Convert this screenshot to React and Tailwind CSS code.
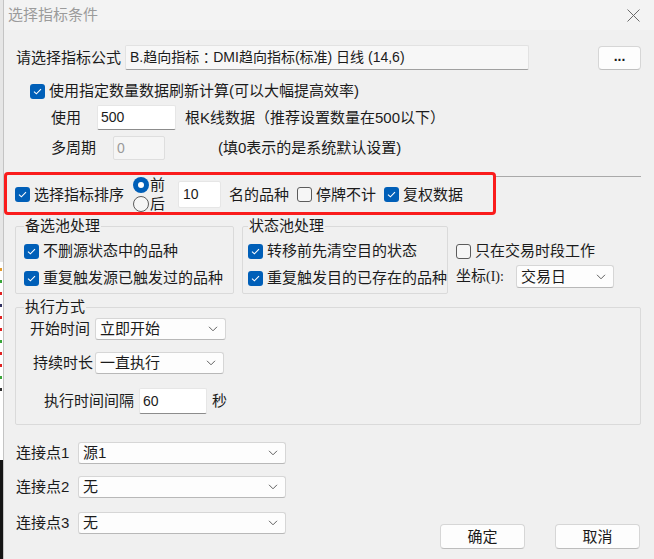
import React from "react";

const font = "font-['Liberation_Sans','Noto_Sans_CJK_SC',sans-serif]";

function Check({ on }) {
  return on ? (
    <span className="w-[15px] h-[15px] rounded-[3px] bg-[#005fb8] flex items-center justify-center shrink-0">
      <svg width="9" height="7" viewBox="0 0 9 7">
        <path d="M1 3.6 L3.4 5.8 L8 1.2" stroke="#fff" strokeWidth="1.1" fill="none" />
      </svg>
    </span>
  ) : (
    <span className="w-[15px] h-[15px] rounded-[3px] border border-[#5c5c5c] bg-[#f6f6f6] shrink-0" />
  );
}

function Radio({ on }) {
  return on ? (
    <span className="w-[16px] h-[16px] rounded-full bg-[#005fb8] flex items-center justify-center shrink-0">
      <span className="w-[6px] h-[6px] rounded-full bg-white" />
    </span>
  ) : (
    <span className="w-[16px] h-[16px] rounded-full border border-[#5c5c5c] bg-[#f6f6f6] shrink-0" />
  );
}

function Chevron() {
  return (
    <svg width="10" height="6" viewBox="0 0 10 6" className="shrink-0">
      <path d="M1 0.8 L5 4.8 L9 0.8" stroke="#606060" strokeWidth="1" fill="none" />
    </svg>
  );
}

function Select({ value, className }) {
  return (
    <div className={"flex items-center justify-between bg-[#fdfdfd] border border-[#d6d6d6] border-b-[#b8b8b8] rounded-[3px] pl-[4px] pr-[7px] " + className}>
      <span className="leading-[18px]">{value}</span>
      <Chevron />
    </div>
  );
}

function CheckRow({ on, label, className = "" }) {
  return (
    <div className={"flex items-center gap-[4px] h-[20px] " + className}>
      <Check on={on} />
      <span className="leading-[18px] whitespace-nowrap">{label}</span>
    </div>
  );
}

export default function App() {
  return (
    <div className={"w-[654px] h-[559px] flex overflow-hidden bg-[#f0f0f0] text-[15px] text-[#1b1b1b] " + font}>
      <div className="w-[3px] flex flex-col shrink-0">
        <div className="h-[262px] bg-[#e6e6e6]" />
        <div className="h-[198px] bg-white flex flex-col gap-[9px] pt-[6px]">
          <div className="h-[3px] w-[2px] bg-[#e39a2a]" />
          <div className="h-[3px] w-[2px] bg-[#3aa53a]" />
          <div className="h-[3px] w-[2px] bg-[#e02020]" />
          <div className="h-[3px] w-[2px] bg-[#303060]" />
          <div className="h-[3px] w-[2px] bg-[#e02020]" />
          <div className="h-[3px] w-[2px] bg-[#e02020]" />
          <div className="h-[3px] w-[2px] bg-[#3aa53a]" />
          <div className="h-[3px] w-[2px] bg-[#e02020]" />
          <div className="h-[3px] w-[2px] bg-[#e02020]" />
          <div className="h-[3px] w-[2px] bg-[#3aa53a]" />
          <div className="h-[3px] w-[2px] bg-[#303030]" />
        </div>
        <div className="flex-1 bg-[#141414]" />
      </div>

      <div className="flex-1 flex flex-col border-l border-[#c4c4c4]">
        {/* title bar */}
        <div className="h-[30px] bg-[#f3f3f3] flex items-center justify-between pl-[4px] pr-[14px]">
          <span className="text-[#9b9b9b] text-[15px] leading-[18px]">选择指标条件</span>
          <svg width="13" height="13" viewBox="0 0 13 13">
            <path d="M0.5 0.5 L12.5 12.5 M12.5 0.5 L0.5 12.5" stroke="#6a6a6a" strokeWidth="1" />
          </svg>
        </div>

        <div className="flex-1 flex flex-col pl-[11px] pr-[13px]">
          {/* formula row */}
          <div className="flex items-center h-[25px] mt-[15px]">
            <span className="ml-[1px] leading-[18px] w-[105px]">请选择指标公式</span>
            <div className="ml-[4px] w-[404px] h-[25px] flex items-center bg-[#f7f7f7] border border-[#e2e2e2] border-b-[#a0a0a0] rounded-[2px] pl-[4px] text-[14px] whitespace-pre">
              B.趋向指标<span className="font-['Noto_Sans_CJK_JP',sans-serif]">：</span>DMI趋向指标(标准) 日线 (14,6)
            </div>
            <button className="ml-auto w-[43px] h-[24px] bg-[#fdfdfd] border border-[#d6d6d6] border-b-[#c0c0c0] rounded-[4px] text-[14px] font-bold leading-[12px] pb-[4px]">
              ...
            </button>
          </div>

          <CheckRow on label="使用指定数量数据刷新计算(可以大幅提高效率)" className="ml-[15px] mt-[11px]" />

          <div className="flex items-center h-[25px] mt-[4px]">
            <span className="ml-[36px] leading-[18px]">使用</span>
            <div className="ml-[16px] w-[79px] h-[25px] flex items-center bg-white border border-[#e6e6e6] border-b-[#8c8c8c] rounded-[2px] pl-[3px] text-[14px]">
              500
            </div>
            <span className="ml-[9px] leading-[18px]">根K线数据（推荐设置数量在500以下）</span>
          </div>

          <div className="flex items-center h-[24px] mt-[6px]">
            <span className="ml-[36px] leading-[18px]">多周期</span>
            <div className="ml-[17px] w-[52px] h-[24px] flex items-center bg-[#f5f5f5] border border-[#dedede] rounded-[2px] pl-[3px] text-[14px] text-[#9a9a9a]">
              0
            </div>
            <span className="ml-[53px] leading-[18px]">(填0表示的是系统默认设置)</span>
          </div>

          {/* sort row (highlighted) */}
          <div className="flex items-start mt-[12px] h-[43px]">
            <div className="-ml-[11px] w-[492px] h-[43px] border-[3px] border-[#fa1c1c] rounded-[4px] flex items-center pl-[8px] pt-[2px]">
              <CheckRow on label="选择指标排序" />
              <div className="ml-[9px] flex flex-col">
                <div className="flex items-center gap-[1px] h-[19px]">
                  <Radio on />
                  <span className="leading-[18px]">前</span>
                </div>
                <div className="flex items-center gap-[1px] h-[19px]">
                  <Radio />
                  <span className="leading-[18px]">后</span>
                </div>
              </div>
              <div className="ml-[13px] w-[43px] h-[27px] flex items-center bg-white border border-[#e6e6e6] rounded-[2px] pl-[4px] text-[14px]">
                10
              </div>
              <span className="ml-[8px] leading-[18px]">名的品种</span>
              <CheckRow label="停牌不计" className="ml-[8px]" />
              <CheckRow on label="复权数据" className="ml-[8px]" />
            </div>
            <div className="flex-1 border-t border-[#a9a9a9] mt-[4px]" />
          </div>

          {/* pools */}
          <div className="flex items-start mt-[2px]">
            <fieldset className="w-[219px] h-[77px] border border-[#dadada] rounded-[2px] pl-[8px]">
              <legend className="px-[1px] leading-[18px]">备选池处理</legend>
              <CheckRow on label="不删源状态中的品种" className="mt-[6px]" />
              <CheckRow on label="重复触发源已触发过的品种" className="mt-[7px]" />
            </fieldset>
            <fieldset className="ml-[8px] w-[206px] h-[77px] border border-[#dadada] rounded-[2px] pl-[5px]">
              <legend className="px-[1px] leading-[18px]">状态池处理</legend>
              <CheckRow on label="转移前先清空目的状态" className="mt-[6px]" />
              <CheckRow on label="重复触发目的已存在的品种" className="mt-[7px]" />
            </fieldset>
            <div className="ml-[8px] flex flex-col pt-[24px]">
              <CheckRow label="只在交易时段工作" />
              <div className="flex items-center mt-[4px]">
                <span className="leading-[18px]">
                  坐标<span className="font-['Liberation_Serif',serif] text-[14px]">(I):</span>
                </span>
                <Select value="交易日" className="ml-[12px] w-[98px] h-[23px]" />
              </div>
            </div>
          </div>

          {/* execution */}
          <fieldset className="mt-[4px] h-[127px] border border-[#dadada] rounded-[2px] pl-[8px]">
            <legend className="px-[1px] leading-[18px]">执行方式</legend>
            <div className="flex items-center mt-[2px]">
              <span className="ml-[6px] leading-[18px]">开始时间</span>
              <Select value="立即开始" className="ml-[5px] w-[131px] h-[22px]" />
            </div>
            <div className="flex items-center mt-[12px]">
              <span className="ml-[9px] leading-[18px]">持续时长</span>
              <Select value="一直执行" className="ml-[2px] w-[129px] h-[22px]" />
            </div>
            <div className="flex items-center mt-[14px]">
              <span className="ml-[20px] leading-[18px]">执行时间间隔</span>
              <div className="ml-[5px] w-[68px] h-[26px] flex items-center bg-white border border-[#e6e6e6] border-b-[#8c8c8c] rounded-[2px] pl-[3px] text-[14px]">
                60
              </div>
              <span className="ml-[5px] leading-[18px]">秒</span>
            </div>
          </fieldset>

          {/* connection points */}
          <div className="flex h-[124px]">
            <div className="flex flex-col">
              <div className="flex items-center mt-[17px]">
                <span className="ml-[1px] w-[62px] leading-[18px]">连接点1</span>
                <Select value="源1" className="w-[208px] h-[22px]" />
              </div>
              <div className="flex items-center mt-[12px]">
                <span className="ml-[1px] w-[62px] leading-[18px]">连接点2</span>
                <Select value="无" className="w-[208px] h-[22px]" />
              </div>
              <div className="flex items-center mt-[14px]">
                <span className="ml-[1px] w-[62px] leading-[18px]">连接点3</span>
                <Select value="无" className="w-[208px] h-[22px]" />
              </div>
            </div>
            <div className="ml-auto self-end flex gap-[30px] mr-[1px]">
              <button className="w-[85px] h-[25px] bg-[#fdfdfd] border border-[#d6d6d6] border-b-[#bdbdbd] rounded-[4px] leading-[18px]">
                确定
              </button>
              <button className="w-[85px] h-[25px] bg-[#fdfdfd] border border-[#d6d6d6] border-b-[#bdbdbd] rounded-[4px] leading-[18px]">
                取消
              </button>
            </div>
          </div>
        </div>
      </div>
    </div>
  );
}
